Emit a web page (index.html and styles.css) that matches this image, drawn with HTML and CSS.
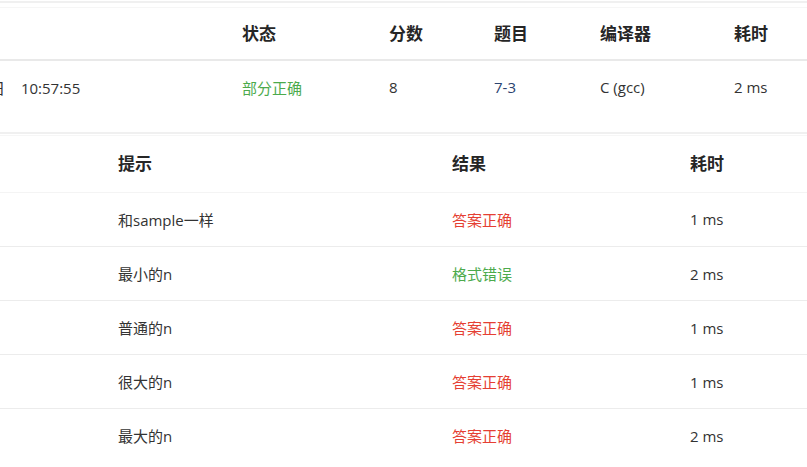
FILE: index.html
```html
<!DOCTYPE html>
<html lang="zh-CN">
<head>
<meta charset="utf-8">
<title>提交详情</title>
<link rel="stylesheet" href="styles.css">
</head>
<body>
<section class="panel summary">
  <div class="scroll">
    <table class="grid grid-summary">
      <colgroup>
        <col class="c-time"><col class="c-status"><col class="c-score"><col class="c-problem"><col class="c-compiler"><col class="c-cost">
      </colgroup>
      <thead>
        <tr><th></th><th>状态</th><th>分数</th><th>题目</th><th>编译器</th><th>耗时</th></tr>
      </thead>
      <tbody>
        <tr>
          <td class="time"><span class="clip">日 10:57:55</span></td>
          <td class="ok-part">部分正确</td>
          <td>8</td>
          <td><a class="link" href="#">7-3</a></td>
          <td>C (gcc)</td>
          <td>2 ms</td>
        </tr>
      </tbody>
    </table>
  </div>
</section>

<section class="panel cases">
  <table class="grid grid-cases">
    <colgroup>
      <col class="k-idx"><col class="k-hint"><col class="k-result"><col class="k-cost">
    </colgroup>
    <thead>
      <tr><th></th><th>提示</th><th>结果</th><th>耗时</th></tr>
    </thead>
    <tbody>
      <tr><td></td><td>和sample一样</td><td class="ac">答案正确</td><td>1 ms</td></tr>
      <tr><td></td><td>最小的n</td><td class="pe">格式错误</td><td>2 ms</td></tr>
      <tr><td></td><td>普通的n</td><td class="ac">答案正确</td><td>1 ms</td></tr>
      <tr><td></td><td>很大的n</td><td class="ac">答案正确</td><td>1 ms</td></tr>
      <tr><td></td><td>最大的n</td><td class="ac">答案正确</td><td>2 ms</td></tr>
    </tbody>
  </table>
</section>
</body>
</html>
```

FILE: styles.css
```css
html, body {
  margin: 0;
  padding: 0;
  background: #fff;
}
body {
  font-family: "Open Sans", "Noto Sans CJK SC", sans-serif;
  font-size: 15px;
  color: #333;
  width: 807px;
  overflow: hidden;
  padding-top: 1px;
}
.panel {
  border-top: 2px solid #f0f0f0;
  padding-top: 4px;
}
.scroll {
  overflow: hidden;
}
.grid {
  border-collapse: collapse;
  table-layout: fixed;
  border-top: 1px solid #f6f6f6;
}
.grid th,
.grid td {
  padding: 0;
  text-align: left;
  white-space: nowrap;
  vertical-align: middle;
}
.grid th {
  font-family: "Noto Sans CJK SC", sans-serif;
  font-weight: 700;
  font-size: 17px;
  color: #262626;
  height: 51px;
  border-bottom: 2px solid #e9e9e9;
}
.grid-summary {
  margin-left: -9px;
  width: 900px;
}
.grid-summary th {
  padding-bottom: 3px;
  height: 48px;
}
.c-time { width: 251px; }
.c-status { width: 147px; }
.c-score { width: 105px; }
.c-problem { width: 106px; }
.c-compiler { width: 134px; }
.c-cost { width: 157px; }
.grid-summary td {
  height: 52px;
}
.grid-summary td.time {
  padding-left: 1px;
}
.clip {
  display: inline-block;
  word-spacing: 12px;
  margin-left: -2px;
}
.summary {
  padding-bottom: 19px;
}
.grid-cases {
  width: 807px;
  margin-top: -3px;
}
.k-idx { width: 118px; }
.k-hint { width: 334px; }
.k-result { width: 238px; }
.k-cost { width: 117px; }
.grid-cases th {
  height: 52px;
}
.grid-cases td {
  height: 53px;
  border-bottom: 1px solid #ececec;
}
.grid-cases tbody tr:first-child td {
  border-top: 4px solid #fff;
  box-shadow: inset 0 1px 0 #f4f4f4;
  height: 54px;
}
.grid-cases tbody tr:last-child td {
  border-bottom: none;
}
.ok-part,
.pe {
  color: #4caa4c;
}
.ac {
  color: #e53f33;
}
.link {
  color: #2c4470;
  text-decoration: none;
}
```
